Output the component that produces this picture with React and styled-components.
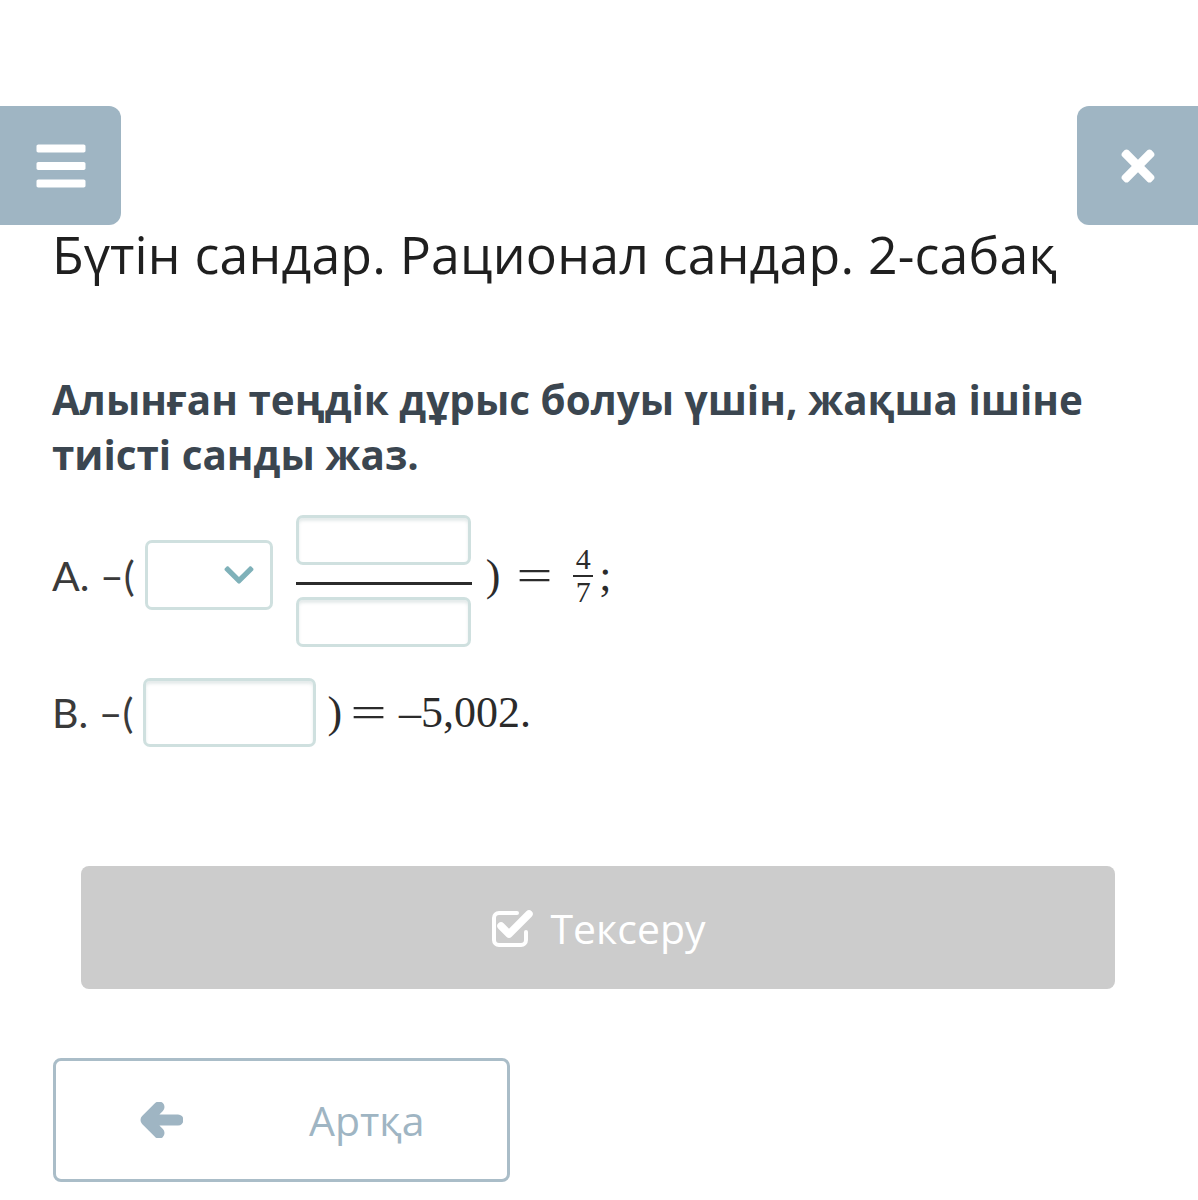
import styled, { createGlobalStyle } from "styled-components";
import { FaBars, FaTimes, FaChevronDown } from "react-icons/fa";

const GlobalStyle = createGlobalStyle`
  body {
    margin: 0;
    background: #ffffff;
    font-family: "Open Sans", "Noto Sans", sans-serif;
  }
`;

const Page = styled.div`
  width: 1198px;
  min-height: 1200px;
  overflow: hidden;
`;

const TopBar = styled.div`
  display: flex;
  justify-content: space-between;
  margin-top: 106px;
`;

const IconButton = styled.div`
  width: 121px;
  height: 119px;
  background: #9fb5c3;
  color: #ffffff;
  display: flex;
  align-items: center;
  justify-content: center;
  font-size: ${(p) => p.$size}px;
  border-radius: ${(p) => (p.$side === "left" ? "0 12px 12px 0" : "12px 0 0 12px")};
`;

const Content = styled.div`
  padding: 0 52px;
`;

const Title = styled.h1`
  margin: 0;
  font-weight: 400;
  font-size: 51.8px;
  line-height: 58px;
  color: #1f1f1f;
  letter-spacing: 0.2px;
`;

const Question = styled.p`
  margin: 89px 0 0;
  font-weight: 700;
  font-size: 40.4px;
  line-height: 55px;
  color: #3b4650;
`;

const Row = styled.div`
  display: flex;
  align-items: center;
  margin-top: ${(p) => p.$top}px;
`;

const Label = styled.span`
  font-family: "Lato", "Open Sans", sans-serif;
  font-size: 41px;
  color: #3a3a3a;
  margin-right: 10px;
`;

const Field = styled.div`
  width: ${(p) => p.$w}px;
  height: ${(p) => p.$h}px;
  box-sizing: border-box;
  border: 3px solid #cfe0df;
  border-radius: 7px;
  background: #ffffff;
  box-shadow: inset 0 3px 3px rgba(150, 175, 175, 0.25);
`;

const Select = styled.div`
  width: 128px;
  height: 70px;
  box-sizing: border-box;
  border: 3px solid #cfe0df;
  border-radius: 7px;
  display: flex;
  align-items: center;
  justify-content: flex-end;
  padding-right: 14px;
  color: #7fb1b9;
  font-size: 34px;
`;

const Fraction = styled.div`
  display: flex;
  flex-direction: column;
  align-items: center;
  margin: 12px 0 0 23px;
`;

const FracLine = styled.div`
  width: 176px;
  height: 3px;
  background: #2b2b2b;
  margin: 17px 0 12px;
`;

const MathText = styled.span`
  display: inline-block;
  font-family: "Liberation Serif", "DejaVu Serif", serif;
  font-size: 44px;
  color: #2b2b2b;
  margin-left: ${(p) => p.$ml || 0}px;
`;

const Equals = styled(MathText)`
  transform: scaleX(1.45);
  margin: 0 ${(p) => p.$mr}px 0 ${(p) => p.$ml}px;
`;

const SmallFrac = styled.span`
  display: inline-flex;
  flex-direction: column;
  align-items: center;
  font-family: "Liberation Serif", serif;
  font-size: 30px;
  line-height: 28px;
  color: #2b2b2b;
  margin-left: 6px;
`;

const SmallLine = styled.span`
  width: 20px;
  height: 2px;
  background: #2b2b2b;
  margin: 2px 0 1px;
`;

const CheckButton = styled.div`
  margin: 119px 31px 0 29px;
  height: 123px;
  background: #cccccc;
  border-radius: 8px;
  display: flex;
  align-items: center;
  justify-content: center;
  gap: 16px;
  color: #ffffff;
  font-size: 41px;
`;

const BackButton = styled.div`
  margin: 69px 0 0 1px;
  width: 457px;
  height: 124px;
  box-sizing: border-box;
  border: 3px solid #aabdc8;
  border-radius: 8px;
  display: flex;
  align-items: center;
  color: #9fb5c3;
  font-size: 41px;
`;

const BackArrow = styled.svg`
  margin-left: 83px;
`;

const BackText = styled.span`
  margin-left: 126px;
`;

function CheckSquare() {
  return (
    <svg width="44" height="40" viewBox="0 0 44 40" fill="none">
      <path
        d="M27 5H9a5 5 0 0 0-5 5v22a5 5 0 0 0 5 5h22a5 5 0 0 0 5-5v-8"
        stroke="#fff"
        strokeWidth="4"
        strokeLinecap="round"
      />
      <path
        d="M11 18l8 8L39 6"
        stroke="#fff"
        strokeWidth="7.5"
        strokeLinecap="round"
        strokeLinejoin="round"
      />
    </svg>
  );
}

export default function App() {
  return (
    <Page>
      <GlobalStyle />
      <TopBar>
        <IconButton $side="left" $size={56}>
          <FaBars />
        </IconButton>
        <IconButton $side="right" $size={48}>
          <FaTimes />
        </IconButton>
      </TopBar>
      <Content>
        <Title>Бүтін сандар. Рационал сандар. 2-сабақ</Title>
        <Question>
          Алынған теңдік дұрыс болуы үшін, жақша ішіне тиісті санды жаз.
        </Question>
        <Row $top={21}>
          <Label>A. –(</Label>
          <Select>
            <FaChevronDown />
          </Select>
          <Fraction>
            <Field $w={175} $h={50} />
            <FracLine />
            <Field $w={175} $h={50} />
          </Fraction>
          <MathText $ml={14}>)</MathText>
          <Equals $ml={22} $mr={20}>=</Equals>
          <SmallFrac>
            <span>4</span>
            <SmallLine />
            <span>7</span>
          </SmallFrac>
          <MathText $ml={6}>;</MathText>
        </Row>
        <Row $top={31}>
          <Label>B. –(</Label>
          <Field $w={173} $h={69} />
          <MathText $ml={11}>)</MathText>
          <Equals $ml={14} $mr={18}>=</Equals>
          <MathText>–5,002.</MathText>
        </Row>
      </Content>
      <Content>
        <CheckButton>
          <CheckSquare />
          <span>Тексеру</span>
        </CheckButton>
        <BackButton>
          <BackArrow width="44" height="36" viewBox="0 0 44 36">
            <path
              d="M20 5L7 18l13 13M8 18h31"
              fill="none"
              stroke="#9fb5c3"
              strokeWidth="11"
              strokeLinecap="round"
              strokeLinejoin="round"
            />
          </BackArrow>
          <BackText>Артқа</BackText>
        </BackButton>
      </Content>
    </Page>
  );
}
